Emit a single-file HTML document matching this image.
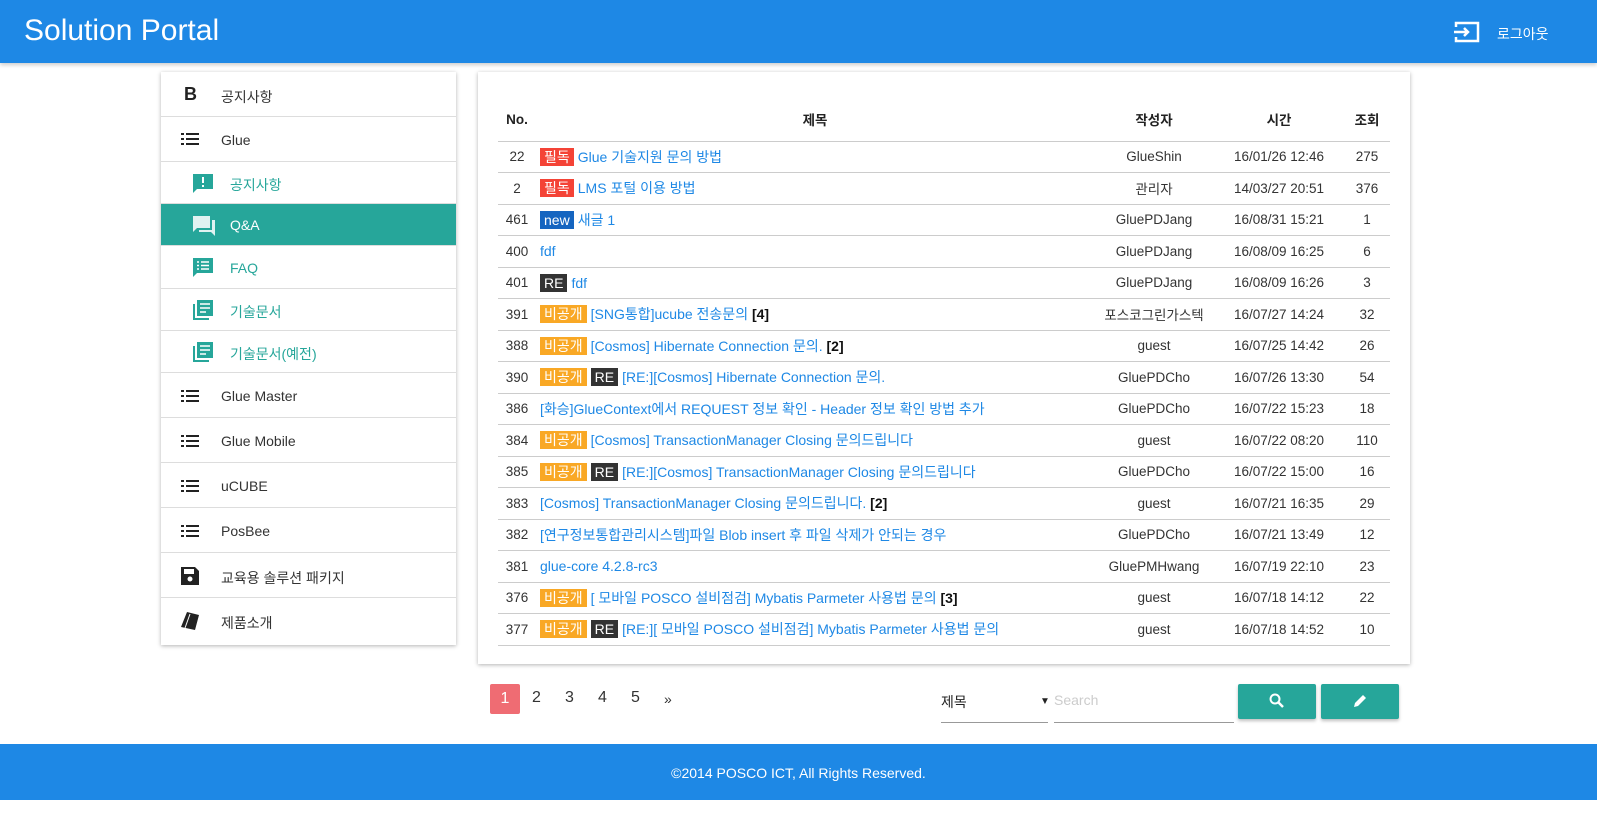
<!DOCTYPE html>
<html><head><meta charset="utf-8"><style>
*{box-sizing:border-box;margin:0;padding:0}
body{width:1597px;height:815px;background:#fff;font-family:"Liberation Sans","Noto Sans CJK KR",sans-serif;position:relative;overflow:hidden;color:#333}
.hdr{position:absolute;left:0;top:0;width:1597px;height:63px;background:#1e88e5;box-shadow:0 2px 4px rgba(0,0,0,.2)}
.hdr .t{position:absolute;left:24px;top:14px;font-size:30px;color:#fff}
.hdr .lo{position:absolute;left:1497px;top:24px;font-size:14px;color:#fff}
.side{position:absolute;left:161px;top:72px;width:295px;height:573px;background:#fff;box-shadow:0 1px 4px rgba(0,0,0,.3)}
.it{position:absolute;left:0;width:295px;border-bottom:1px solid #ddd;font-size:14px;color:#333}
.it span{position:absolute;left:60px}
.it.sub{color:#26a69a}
.it.sub span{left:69px}
.it.act{background:#26a69a;color:#fff}
.ic{position:absolute;left:20px}
.card{position:absolute;left:478px;top:72px;width:932px;height:592px;background:#fff;box-shadow:0 1px 4px rgba(0,0,0,.3)}
table{position:absolute;left:20px;top:26px;width:892px;border-collapse:collapse;font-size:13.5px}
th{height:43px;border-bottom:1px solid #ccc;font-size:13.5px;color:#222;font-weight:bold;vertical-align:middle}
td{height:31.5px;border-bottom:1px solid #ccc;color:#333;text-align:center;white-space:nowrap}
td.s{text-align:left;color:#1e88e5;font-size:14px;padding-left:4px}
.b{display:inline-block;color:#fff;padding:0 4px;line-height:18px;margin-right:4px}
.r{background:#f44336}.n{background:#1565c0}.k{background:#333}.o{background:#f9a825}
.c{color:#111;font-weight:bold}
.pg{position:absolute;top:689px;font-size:16px;color:#333}
.btn{position:absolute;top:684px;height:35px;width:78px;background:#26a69a;border-radius:2px;box-shadow:0 2px 3px rgba(0,0,0,.25)}
.ft{position:absolute;left:0;top:744px;width:1597px;height:56px;background:#1e88e5;color:#fff;text-align:center;font-size:14px;line-height:58px}
</style></head><body>
<div class="hdr"><div class="t">Solution Portal</div>
<svg style="position:absolute;left:1453px;top:20px" width="28" height="24" viewBox="0 0 28 24"><path d="M3 7V3h22v18H3v-4" fill="none" stroke="#fff" stroke-width="2.5"/><path d="M1 12h14M11 8l4 4-4 4" fill="none" stroke="#fff" stroke-width="2.5"/></svg>
<div class="lo">로그아웃</div></div>

<div class="side">
<div class="it" style="top:0;height:45px"><b class="ic" style="left:23px;top:12px;font-size:18px;color:#222">B</b><span style="top:15px">공지사항</span></div>
<div class="it" style="top:45px;height:45px"><svg class="ic" style="top:16px" width="18" height="12"><path d="M0 1h3M5 1h13M0 6h3M5 6h13M0 11h3M5 11h13" stroke="#222" stroke-width="2"/></svg><span style="top:15px">Glue</span></div>
<div class="it sub" style="top:90px;height:42px"><svg class="ic" style="left:32px;top:12px" width="20" height="20"><path d="M0 0h20v15H4l-4 4z" fill="#26a69a"/><path d="M10 3v6M10 11v2" stroke="#fff" stroke-width="2"/></svg><span style="top:13px">공지사항</span></div>
<div class="it sub act" style="top:132px;height:42px"><svg class="ic" style="left:32px;top:12px" width="22" height="20"><path d="M0 0h17v12H4l-4 4z" fill="#e0f2f1"/><path d="M19 4h3v16l-4-4H6v-2h13z" fill="#e0f2f1"/></svg><span style="top:13px;color:#fff">Q&amp;A</span></div>
<div class="it sub" style="top:174px;height:43px"><svg class="ic" style="left:32px;top:12px" width="20" height="20"><path d="M0 0h20v15H4l-4 4z" fill="#26a69a"/><path d="M4 4h2M8 4h8M4 7.5h2M8 7.5h8M4 11h2M8 11h8" stroke="#fff" stroke-width="1.6"/></svg><span style="top:14px">FAQ</span></div>
<div class="it sub" style="top:217px;height:42px"><svg class="ic" style="left:32px;top:11px" width="20" height="20"><path d="M1 4v15h15" fill="none" stroke="#26a69a" stroke-width="2"/><rect x="4" y="0" width="16" height="16" fill="#26a69a"/><path d="M7 4h10M7 8h10M7 12h6" stroke="#fff" stroke-width="1.6"/></svg><span style="top:13px">기술문서</span></div>
<div class="it sub" style="top:259px;height:42px"><svg class="ic" style="left:32px;top:11px" width="20" height="20"><path d="M1 4v15h15" fill="none" stroke="#26a69a" stroke-width="2"/><rect x="4" y="0" width="16" height="16" fill="#26a69a"/><path d="M7 4h10M7 8h10M7 12h6" stroke="#fff" stroke-width="1.6"/></svg><span style="top:13px">기술문서(예전)</span></div>
<div class="it" style="top:301px;height:45px"><svg class="ic" style="top:17px" width="18" height="12"><path d="M0 1h3M5 1h13M0 6h3M5 6h13M0 11h3M5 11h13" stroke="#222" stroke-width="2"/></svg><span style="top:15px">Glue Master</span></div>
<div class="it" style="top:346px;height:45px"><svg class="ic" style="top:17px" width="18" height="12"><path d="M0 1h3M5 1h13M0 6h3M5 6h13M0 11h3M5 11h13" stroke="#222" stroke-width="2"/></svg><span style="top:15px">Glue Mobile</span></div>
<div class="it" style="top:391px;height:45px"><svg class="ic" style="top:17px" width="18" height="12"><path d="M0 1h3M5 1h13M0 6h3M5 6h13M0 11h3M5 11h13" stroke="#222" stroke-width="2"/></svg><span style="top:15px">uCUBE</span></div>
<div class="it" style="top:436px;height:45px"><svg class="ic" style="top:17px" width="18" height="12"><path d="M0 1h3M5 1h13M0 6h3M5 6h13M0 11h3M5 11h13" stroke="#222" stroke-width="2"/></svg><span style="top:15px">PosBee</span></div>
<div class="it" style="top:481px;height:45px"><svg class="ic" style="top:14px" width="18" height="18"><path d="M0 0h14l4 4v14H0z" fill="#222"/><rect x="3" y="2" width="10" height="5" fill="#fff"/><circle cx="9" cy="12" r="2.5" fill="#fff"/></svg><span style="top:15px">교육용 솔루션 패키지</span></div>
<div class="it" style="top:526px;height:47px;border:none"><svg class="ic" style="top:14px" width="20" height="18"><path d="M6 0l12 3-4 15-14-3z" fill="#222"/><path d="M9 2l-5 14" stroke="#fff" stroke-width="1"/></svg><span style="top:15px">제품소개</span></div>
</div>

<div class="card"><table>
<tr><th style="width:38px">No.</th><th>제목</th><th style="width:120px">작성자</th><th style="width:130px">시간</th><th style="width:46px">조회</th></tr>
<tr><td>22</td><td class="s"><span class="b r">필독</span>Glue 기술지원 문의 방법</td><td>GlueShin</td><td>16/01/26 12:46</td><td>275</td></tr>
<tr><td>2</td><td class="s"><span class="b r">필독</span>LMS 포털 이용 방법</td><td>관리자</td><td>14/03/27 20:51</td><td>376</td></tr>
<tr><td>461</td><td class="s"><span class="b n">new</span>새글 1</td><td>GluePDJang</td><td>16/08/31 15:21</td><td>1</td></tr>
<tr><td>400</td><td class="s">fdf</td><td>GluePDJang</td><td>16/08/09 16:25</td><td>6</td></tr>
<tr><td>401</td><td class="s"><span class="b k">RE</span>fdf</td><td>GluePDJang</td><td>16/08/09 16:26</td><td>3</td></tr>
<tr><td>391</td><td class="s"><span class="b o">비공개</span>[SNG통합]ucube 전송문의 <span class="c">[4]</span></td><td>포스코그린가스텍</td><td>16/07/27 14:24</td><td>32</td></tr>
<tr><td>388</td><td class="s"><span class="b o">비공개</span>[Cosmos] Hibernate Connection 문의. <span class="c">[2]</span></td><td>guest</td><td>16/07/25 14:42</td><td>26</td></tr>
<tr><td>390</td><td class="s"><span class="b o">비공개</span><span class="b k">RE</span>[RE:][Cosmos] Hibernate Connection 문의.</td><td>GluePDCho</td><td>16/07/26 13:30</td><td>54</td></tr>
<tr><td>386</td><td class="s">[화승]GlueContext에서 REQUEST 정보 확인 - Header 정보 확인 방법 추가</td><td>GluePDCho</td><td>16/07/22 15:23</td><td>18</td></tr>
<tr><td>384</td><td class="s"><span class="b o">비공개</span>[Cosmos] TransactionManager Closing 문의드립니다</td><td>guest</td><td>16/07/22 08:20</td><td>110</td></tr>
<tr><td>385</td><td class="s"><span class="b o">비공개</span><span class="b k">RE</span>[RE:][Cosmos] TransactionManager Closing 문의드립니다</td><td>GluePDCho</td><td>16/07/22 15:00</td><td>16</td></tr>
<tr><td>383</td><td class="s">[Cosmos] TransactionManager Closing 문의드립니다. <span class="c">[2]</span></td><td>guest</td><td>16/07/21 16:35</td><td>29</td></tr>
<tr><td>382</td><td class="s">[연구정보통합관리시스템]파일 Blob insert 후 파일 삭제가 안되는 경우</td><td>GluePDCho</td><td>16/07/21 13:49</td><td>12</td></tr>
<tr><td>381</td><td class="s">glue-core 4.2.8-rc3</td><td>GluePMHwang</td><td>16/07/19 22:10</td><td>23</td></tr>
<tr><td>376</td><td class="s"><span class="b o">비공개</span>[ 모바일 POSCO 설비점검] Mybatis Parmeter 사용법 문의 <span class="c">[3]</span></td><td>guest</td><td>16/07/18 14:12</td><td>22</td></tr>
<tr><td>377</td><td class="s"><span class="b o">비공개</span><span class="b k">RE</span>[RE:][ 모바일 POSCO 설비점검] Mybatis Parmeter 사용법 문의</td><td>guest</td><td>16/07/18 14:52</td><td>10</td></tr>
</table></div>

<div style="position:absolute;left:490px;top:684px;width:30px;height:30px;background:#ef6c73;border-radius:2px;color:#fff;font-size:16px;text-align:center;line-height:30px">1</div>
<div class="pg" style="left:532px">2</div><div class="pg" style="left:565px">3</div><div class="pg" style="left:598px">4</div><div class="pg" style="left:631px">5</div><div class="pg" style="left:664px;font-size:14px;top:691px">»</div>
<div style="position:absolute;left:941px;top:692px;font-size:14px;color:#222">제목</div>
<div style="position:absolute;left:1040px;top:696px;font-size:10px;color:#222">▼</div>
<div style="position:absolute;left:941px;top:722px;width:107px;border-top:1px solid #999"></div>
<div style="position:absolute;left:1054px;top:692px;font-size:14px;color:#ccc">Search</div>
<div style="position:absolute;left:1054px;top:722px;width:180px;border-top:1px solid #999"></div>
<div class="btn" style="left:1238px"><svg style="position:absolute;left:31px;top:9px" width="16" height="16"><circle cx="6" cy="6" r="4.5" fill="none" stroke="#fff" stroke-width="2"/><path d="M9 9l5 5" stroke="#fff" stroke-width="2.5"/></svg></div>
<div class="btn" style="left:1321px"><svg style="position:absolute;left:31px;top:9px" width="16" height="16"><path d="M2 14l1-4 8-8 3 3-8 8z" fill="#fff"/></svg></div>
<div class="ft">©2014 POSCO ICT, All Rights Reserved.</div>
</body></html>
